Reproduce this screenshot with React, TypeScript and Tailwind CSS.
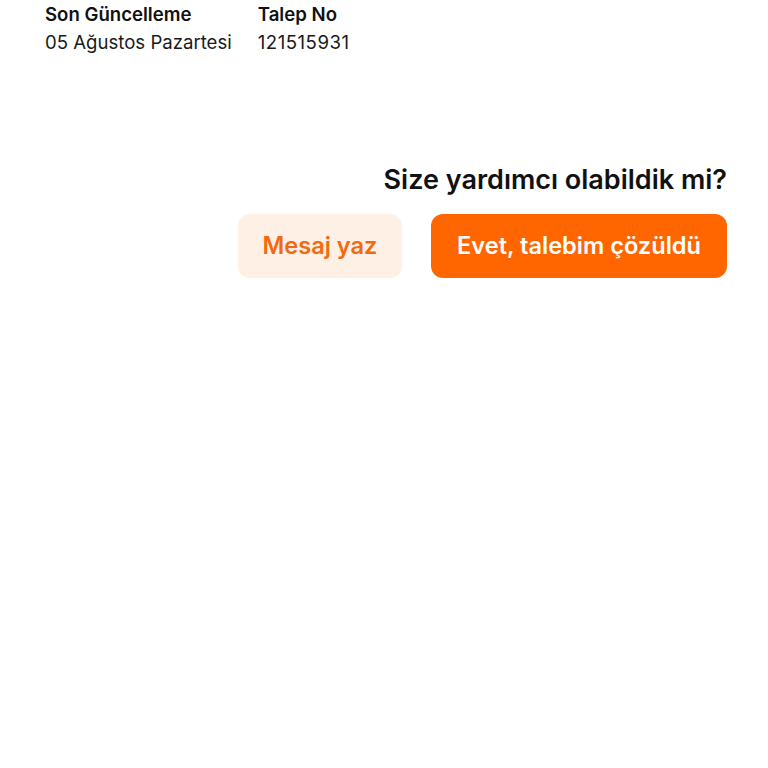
import React from "react";

export default function App() {
  return (
    <div className="w-[768px] h-[768px] bg-white" style={{ fontFamily: "Inter, 'Noto Sans', sans-serif" }}>
      <div className="pl-[45px] pr-[41px]">
        <div className="flex gap-[26px] pt-[1px]">
          <div className="flex flex-col">
            <div className="text-[18.6px] leading-[26px] font-semibold text-[#111111]">Son Güncelleme</div>
            <div className="text-[18.6px] leading-[30px] text-[#1a1a1a]">05 Ağustos Pazartesi</div>
          </div>
          <div className="flex flex-col">
            <div className="text-[18.6px] leading-[26px] font-semibold text-[#111111]">Talep No</div>
            <div className="text-[18.6px] leading-[30px] text-[#1a1a1a] tracking-[0.5px]">121515931</div>
          </div>
        </div>
        <div className="mt-[105px] flex flex-col items-end">
          <div className="text-[27px] leading-[35px] font-semibold text-[#111111]">Size yardımcı olabildik mi?</div>
          <div className="mt-[17px] flex gap-[29px]">
            <button className="h-[64px] w-[164px] rounded-[12px] bg-[#FFF0E6] text-[#F26A10] text-[23.6px] font-semibold">Mesaj yaz</button>
            <button className="h-[64px] w-[296px] rounded-[12px] bg-[#FF6600] text-white text-[23.6px] font-semibold">Evet, talebim çözüldü</button>
          </div>
        </div>
      </div>
    </div>
  );
}
